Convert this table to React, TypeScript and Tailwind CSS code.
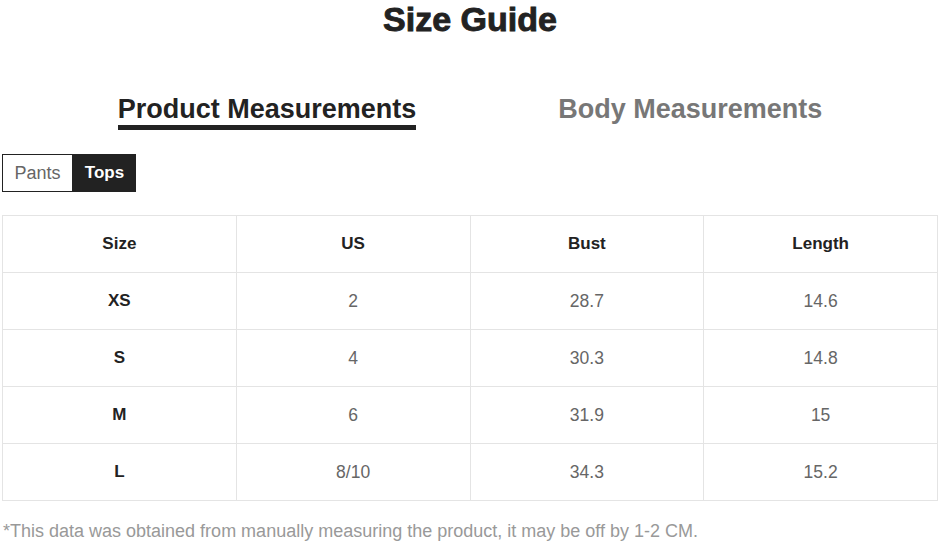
import React from "react";

const rows = [
  ["XS", "2", "28.7", "14.6"],
  ["S", "4", "30.3", "14.8"],
  ["M", "6", "31.9", "15"],
  ["L", "8/10", "34.3", "15.2"],
];

export default function App() {
  return (
    <div
      className="w-[940px] h-[543px] bg-white overflow-hidden"
      style={{ fontFamily: '"Liberation Sans", Arial, sans-serif' }}
    >
      <div className="h-[38px] text-center text-[34px] leading-[38px] font-bold text-[#222] [-webkit-text-stroke:0.9px_#222]">
        Size Guide
      </div>
      <div className="mt-[55px] flex justify-center gap-[142px]">
        <div className="text-[27px] leading-[32px] font-bold text-[#222] border-b-[5px] border-[#222]">
          Product Measurements
        </div>
        <div className="text-[27px] leading-[32px] font-bold text-[#777]">
          Body Measurements
        </div>
      </div>
      <div className="mt-[24px] ml-[2px] flex h-[38px]">
        <div className="w-[71px] border border-[#222] flex items-center justify-center text-[18px] text-[#666]">
          Pants
        </div>
        <div className="w-[63px] bg-[#222] flex items-center justify-center text-[17px] font-bold text-white">
          Tops
        </div>
      </div>
      <table className="mt-[23px] ml-[2px] w-[936px] border-collapse table-fixed">
        <thead>
          <tr className="h-[57px]">
            {["Size", "US", "Bust", "Length"].map((h) => (
              <th
                key={h}
                className="border border-[#e4e4e4] text-[17px] font-bold text-[#222] text-center"
              >
                {h}
              </th>
            ))}
          </tr>
        </thead>
        <tbody>
          {rows.map((r) => (
            <tr key={r[0]} className="h-[57px]">
              {r.map((c, i) => (
                <td
                  key={i}
                  className={
                    i === 0
                      ? "border border-[#e4e4e4] text-center text-[17px] font-bold text-[#222]"
                      : "border border-[#e4e4e4] text-center text-[17.5px] text-[#666]"
                  }
                >
                  {c}
                </td>
              ))}
            </tr>
          ))}
        </tbody>
      </table>
      <div className="mt-[18px] ml-[3px] text-[18px] leading-[24px] text-[#999]">
        *This data was obtained from manually measuring the product, it may be off by 1-2 CM.
      </div>
    </div>
  );
}
